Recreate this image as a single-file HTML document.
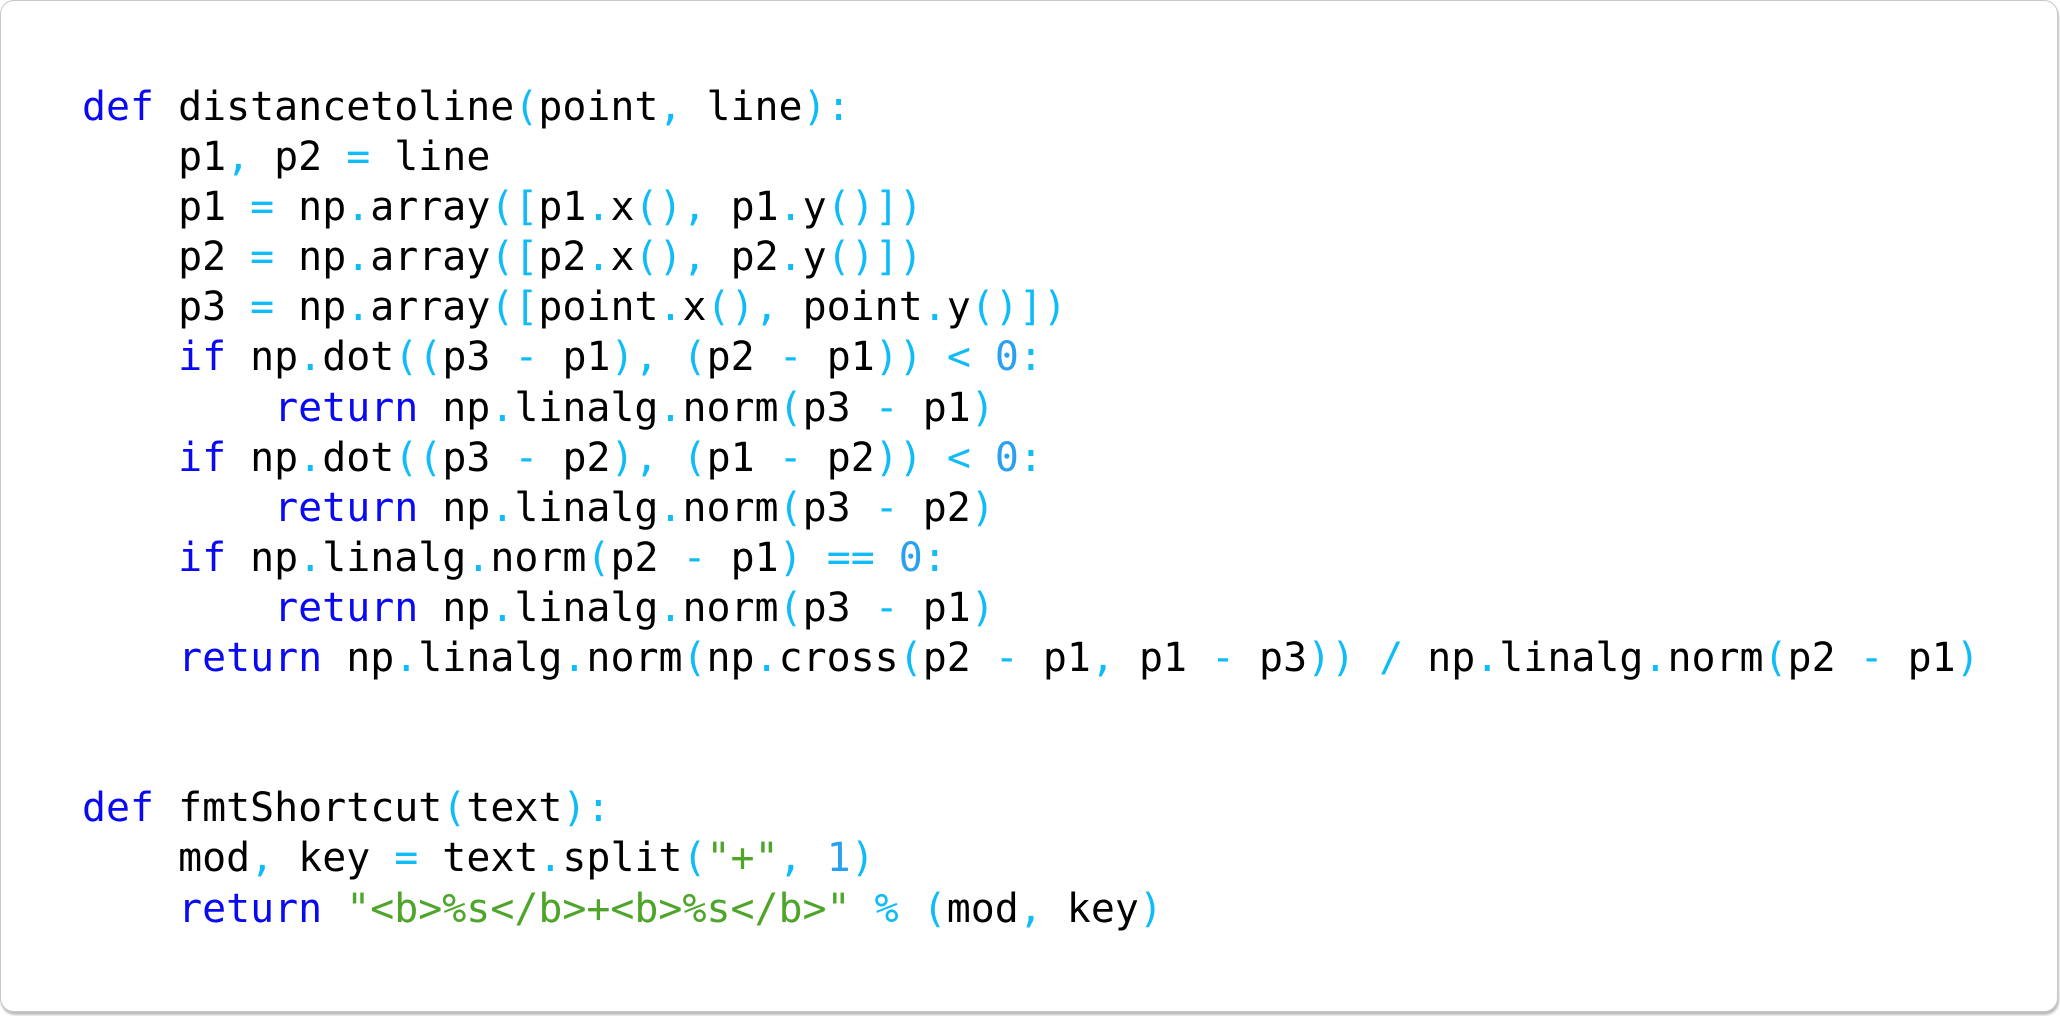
<!DOCTYPE html>
<html><head><style>
html,body{margin:0;padding:0;background:#fff;width:2060px;height:1016px;overflow:hidden}
.box{position:absolute;left:0;top:0;width:2056px;height:1010px;border:1px solid #c8c8c8;border-radius:14px;box-shadow:1px 3px 2px #bdbdbd;background:#fff}
pre{position:absolute;left:82px;top:82px;margin:0;font-family:"DejaVu Sans Mono","Liberation Mono",monospace;font-size:39.9px;line-height:50.1px;color:#000}
.k{color:#0a0af0}.p{color:#10bcf8}.n{color:#2aa0f0}.s{color:#4ea52a}
</style></head><body><div class="box"></div>
<pre><span class="k">def</span> distancetoline<span class="p">(</span>point<span class="p">,</span> line<span class="p">):</span>
    p1<span class="p">,</span> p2 <span class="p">=</span> line
    p1 <span class="p">=</span> np<span class="p">.</span>array<span class="p">([</span>p1<span class="p">.</span>x<span class="p">(),</span> p1<span class="p">.</span>y<span class="p">()])</span>
    p2 <span class="p">=</span> np<span class="p">.</span>array<span class="p">([</span>p2<span class="p">.</span>x<span class="p">(),</span> p2<span class="p">.</span>y<span class="p">()])</span>
    p3 <span class="p">=</span> np<span class="p">.</span>array<span class="p">([</span>point<span class="p">.</span>x<span class="p">(),</span> point<span class="p">.</span>y<span class="p">()])</span>
    <span class="k">if</span> np<span class="p">.</span>dot<span class="p">((</span>p3 <span class="p">-</span> p1<span class="p">),</span> <span class="p">(</span>p2 <span class="p">-</span> p1<span class="p">))</span> <span class="p">&lt;</span> <span class="n">0</span><span class="p">:</span>
        <span class="k">return</span> np<span class="p">.</span>linalg<span class="p">.</span>norm<span class="p">(</span>p3 <span class="p">-</span> p1<span class="p">)</span>
    <span class="k">if</span> np<span class="p">.</span>dot<span class="p">((</span>p3 <span class="p">-</span> p2<span class="p">),</span> <span class="p">(</span>p1 <span class="p">-</span> p2<span class="p">))</span> <span class="p">&lt;</span> <span class="n">0</span><span class="p">:</span>
        <span class="k">return</span> np<span class="p">.</span>linalg<span class="p">.</span>norm<span class="p">(</span>p3 <span class="p">-</span> p2<span class="p">)</span>
    <span class="k">if</span> np<span class="p">.</span>linalg<span class="p">.</span>norm<span class="p">(</span>p2 <span class="p">-</span> p1<span class="p">)</span> <span class="p">==</span> <span class="n">0</span><span class="p">:</span>
        <span class="k">return</span> np<span class="p">.</span>linalg<span class="p">.</span>norm<span class="p">(</span>p3 <span class="p">-</span> p1<span class="p">)</span>
    <span class="k">return</span> np<span class="p">.</span>linalg<span class="p">.</span>norm<span class="p">(</span>np<span class="p">.</span>cross<span class="p">(</span>p2 <span class="p">-</span> p1<span class="p">,</span> p1 <span class="p">-</span> p3<span class="p">))</span> <span class="p">/</span> np<span class="p">.</span>linalg<span class="p">.</span>norm<span class="p">(</span>p2 <span class="p">-</span> p1<span class="p">)</span>


<span class="k">def</span> fmtShortcut<span class="p">(</span>text<span class="p">):</span>
    mod<span class="p">,</span> key <span class="p">=</span> text<span class="p">.</span>split<span class="p">(</span><span class="s">"+"</span><span class="p">,</span> <span class="n">1</span><span class="p">)</span>
    <span class="k">return</span> <span class="s">"&lt;b&gt;%s&lt;/b&gt;+&lt;b&gt;%s&lt;/b&gt;"</span> <span class="p">%</span> <span class="p">(</span>mod<span class="p">,</span> key<span class="p">)</span></pre>
</body></html>
